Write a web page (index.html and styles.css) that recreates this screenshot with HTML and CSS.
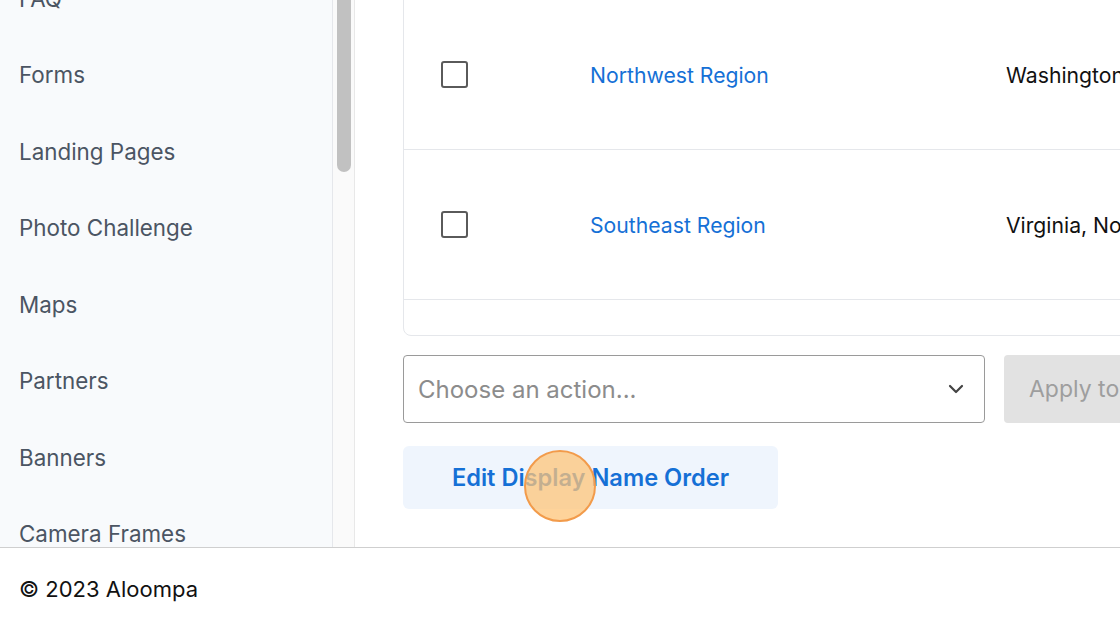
FILE: index.html
```html
<!DOCTYPE html>
<html>
<head>
<meta charset="utf-8">
<link rel="stylesheet" href="styles.css">
</head>
<body>
<div class="app">
  <div class="layout">
    <aside class="sidebar">
      <ul class="nav">
        <li>FAQ</li>
        <li>Forms</li>
        <li>Landing Pages</li>
        <li>Photo Challenge</li>
        <li>Maps</li>
        <li>Partners</li>
        <li>Banners</li>
        <li>Camera Frames</li>
      </ul>
    </aside>
    <div class="scrolltrack"><div class="thumb"></div></div>
    <main class="main">
      <div class="card">
        <div class="row">
          <div class="cell check"><span class="box"></span></div>
          <div class="cell name"><a>Northwest Region</a></div>
          <div class="cell states">Washington, Oregon, Idaho</div>
        </div>
        <div class="row">
          <div class="cell check"><span class="box"></span></div>
          <div class="cell name"><a>Southeast Region</a></div>
          <div class="cell states">Virginia, North Carolina</div>
        </div>
        <div class="row-foot"></div>
      </div>
      <div class="actions">
        <div class="select">
          <span class="placeholder">Choose an action...</span>
          <svg class="chev" width="16" height="10" viewBox="0 0 16 10"><path d="M2 2 L8 8 L14 2" fill="none" stroke="#444" stroke-width="2.2" stroke-linecap="round" stroke-linejoin="round"/></svg>
        </div>
        <div class="apply">Apply to selected</div>
      </div>
      <div class="edit-wrap">
        <div class="edit-btn">Edit Display Name Order</div>
        <span class="cursor"></span>
      </div>
    </main>
  </div>
  <footer class="footer">© 2023 Aloompa</footer>
</div>
</body>
</html>
```

FILE: styles.css
```css
* { box-sizing: border-box; }
html, body { margin: 0; padding: 0; }
body {
  width: 1120px;
  height: 630px;
  overflow: hidden;
  font-family: Inter, "Noto Sans", sans-serif;
  background: #fff;
}
.app { display: flex; flex-direction: column; height: 630px; }
.layout { display: flex; height: 547px; overflow: hidden; }
.sidebar {
  width: 333px;
  flex: none;
  background: #f8fafc;
  border-right: 1px solid #e5e7eb;
  overflow: hidden;
}
.nav { list-style: none; margin: -40px 0 0 0; padding: 0; }
.nav li {
  height: 76.5px;
  display: flex;
  align-items: center;
  padding-left: 19px;
  font-size: 22.4px;
  color: #4b5563;
}
.scrolltrack {
  width: 22px;
  flex: none;
  background: #fafafa;
  border-right: 1px solid #e8e8e8;
  padding: 0 3px 0 4px;
}
.thumb {
  height: 182px;
  margin-top: -10px;
  background: #c1c1c1;
  border-radius: 0 0 7px 7px;
}
.main {
  flex: 1;
  padding: 0 0 0 48px;
  overflow: hidden;
  position: relative;
}
.card {
  width: 760px;
  margin-top: -1px;
  border: 1px solid #e5e7eb;
  border-radius: 0 0 8px 8px;
}
.row {
  display: flex;
  align-items: center;
  height: 150px;
  border-bottom: 1px solid #e5e7eb;
  font-size: 21.2px;
}
.cell.check { width: 186px; padding-left: 37px; flex: none; }
.box {
  display: block;
  width: 27px;
  height: 27px;
  border: 2.5px solid #5a5a5a;
  border-radius: 3px;
}
.cell.name { width: 416px; flex: none; }
.cell.name a { color: #1570d6; }
.cell.states { white-space: nowrap; color: #111; }
.row-foot { height: 35px; }
.actions {
  display: flex;
  gap: 19px;
  margin-top: 19px;
}
.select {
  width: 582px;
  flex: none;
  height: 68px;
  border: 1px solid #9a9a9a;
  border-radius: 4px;
  display: flex;
  align-items: center;
  justify-content: space-between;
  padding: 0 20px 0 14px;
}
.placeholder { font-size: 24px; color: #8c8c8c; }
.apply {
  width: 240px;
  height: 68px;
  flex: none;
  background: #e2e2e2;
  border-radius: 4px;
  display: flex;
  align-items: center;
  padding-left: 25px;
  font-size: 23px;
  color: #9e9e9e;
  white-space: nowrap;
}
.edit-wrap { position: relative; margin-top: 23px; width: 375px; }
.edit-btn {
  width: 375px;
  height: 63px;
  background: #eff5fd;
  border-radius: 6px;
  display: flex;
  align-items: center;
  justify-content: center;
  font-size: 23.6px;
  font-weight: 600;
  color: #1570d6;
}
.cursor {
  position: absolute;
  left: 121px;
  top: 4px;
  width: 72px;
  height: 72px;
  border-radius: 50%;
  background: rgba(253, 196, 120, 0.75);
  border: 2px solid #f29b4b;
}
.footer {
  height: 83px;
  border-top: 1px solid #cfcfcf;
  display: flex;
  align-items: center;
  padding-left: 19px;
  font-size: 22px;
  color: #111;
}
```
